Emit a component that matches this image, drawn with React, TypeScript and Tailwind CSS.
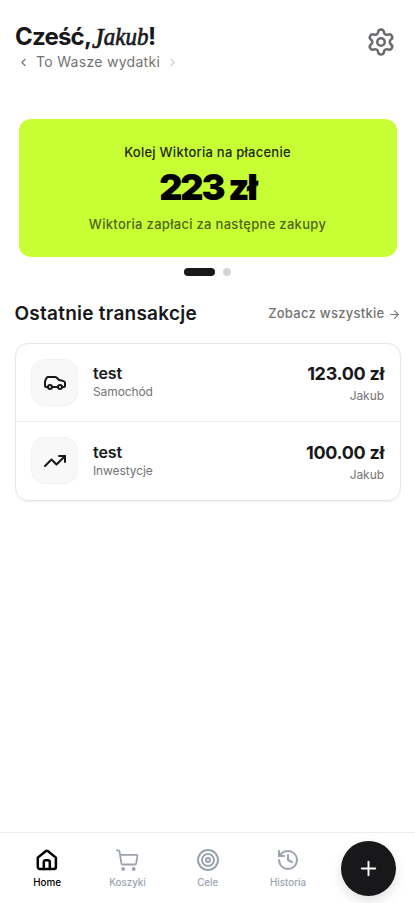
import React from "react";
import { ArrowRight, Car, ChevronLeft, ChevronRight, History, Plus, Settings, Target, TrendingUp, type LucideIcon } from "lucide-react";

type Transaction = { name: string; category: string; amount: string; person: string; icon: LucideIcon };

const transactions: Transaction[] = [
  { name: "test", category: "Samochód", amount: "123.00 zł", person: "Jakub", icon: Car },
  { name: "test", category: "Inwestycje", amount: "100.00 zł", person: "Jakub", icon: TrendingUp },
];

function HomeIcon() {
  return (
    <svg width="24" height="24" viewBox="0 0 24 24" fill="none" stroke="currentColor" strokeWidth="2.5" strokeLinejoin="round" strokeLinecap="round">
      <path d="M2.8 9.6 10.6 3.2a2 2 0 0 1 2.5 0l7.8 6.4V19a2 2 0 0 1-2 2H4.8a2 2 0 0 1-2-2Z" />
      <path d="M8.8 21v-6.8a2 2 0 0 1 2-2h2a2 2 0 0 1 2 2V21" />
    </svg>
  );
}

function CartIcon() {
  return (
    <svg width="24" height="24" viewBox="0 0 24 24" fill="none" stroke="currentColor" strokeWidth="1.8" strokeLinejoin="round" strokeLinecap="round">
      <path d="M1.9 2.4h1.3c.7 0 1.2.4 1.3 1l1.9 11.9c.1.8.7 1.2 1.4 1.2h12c.7 0 1.3-.4 1.4-1.1l1.2-7.2c.1-.8-.4-1.4-1.2-1.4H5.1" />
      <circle cx="8.2" cy="21" r="1.9" fill="currentColor" stroke="none" />
      <circle cx="18.7" cy="21" r="1.9" fill="currentColor" stroke="none" />
    </svg>
  );
}

const tabs = [
  { label: "Home", icon: <HomeIcon />, active: true },
  { label: "Koszyki", icon: <CartIcon />, active: false },
  { label: "Cele", icon: <Target size={24} />, active: false },
  { label: "Historia", icon: <History size={24} />, active: false },
];

function Header() {
  return (
    <header className="flex h-[118.5px] shrink-0 items-start justify-between pl-[15px] pr-[19px] pt-[22px]">
      <div>
        <h1 className="flex h-[29px] items-center whitespace-nowrap text-[24px] font-bold leading-[29px] tracking-[-0.8px]">
          <span className="w-[77px]">Cześć,</span>
          <span className="w-[56px] origin-left scale-x-[0.88] font-['Liberation_Serif',serif] text-[26px] font-normal italic tracking-[0.1px] [-webkit-text-stroke:0.7px_#18181b]">
            <span className="inline-block translate-y-[3px] text-[30px] leading-[26px]">J</span>akub
          </span>
          <span>!</span>
        </h1>
        <div className="flex h-[22px] items-center text-[14px] leading-5 tracking-[0.3px] text-[#737373]">
          <ChevronLeft size={13} className="ml-[2px] mr-[6px]" strokeWidth={2} />
          <span>To Wasze wydatki</span>
          <ChevronRight size={13} className="ml-[6px] text-[#d0d0d0]" strokeWidth={2} />
        </div>
      </div>
      <button className="mt-[5px]" aria-label="Ustawienia">
        <Settings size={30} strokeWidth={2} className="text-[#6b6b6f]" />
      </button>
    </header>
  );
}

function BalanceCard() {
  return (
    <section>
      <div className="mx-[18.5px] flex h-[138.5px] flex-col items-center rounded-[12px] bg-[#c8ff34] pt-[23px]">
        <p className="text-[13px] font-medium leading-5 tracking-[0.25px] text-[#1e2908]">Kolej Wiktoria na płacenie</p>
        <p className="mt-[5px] text-[36px] font-black leading-10 tracking-[-2.2px] text-black">223 zł</p>
        <p className="mt-[7px] text-[13px] font-medium leading-5 tracking-[0.3px] text-[#50661a]">Wiktoria zapłaci za następne zakupy</p>
      </div>
      <div className="mt-[11px] flex h-2 items-center justify-center gap-2">
        <span className="h-2 w-[31px] rounded-full bg-[#18181b]" />
        <span className="size-2 rounded-full bg-[#d4d4d4]" />
      </div>
    </section>
  );
}

function TransactionRow({ item }: { item: Transaction }) {
  const Icon = item.icon;
  return (
    <li className="flex h-[78px] items-center px-[15.5px]">
      <div className="flex size-[47px] items-center justify-center rounded-[14px] border border-[#f1f1f1] bg-[#f8f8f8]">
        <Icon size={24} strokeWidth={2} />
      </div>
      <div className="ml-[15px] flex-1">
        <p className="text-[16px] font-semibold leading-5 tracking-[-0.1px]">{item.name}</p>
        <p className="text-[12px] leading-[18px] tracking-[-0.1px] text-[#737373]">{item.category}</p>
      </div>
      <div className="pt-[4px] text-right">
        <p className="text-[18px] font-bold leading-6 tracking-[-0.3px]">{item.amount}</p>
        <p className="text-[12px] leading-5 tracking-[-0.05px] text-[#737373]">{item.person}</p>
      </div>
    </li>
  );
}

function BottomNav() {
  return (
    <nav className="flex h-[71px] shrink-0 items-start border-t border-[#ececee] pl-[7px]">
      {tabs.map(({ label, icon, active }) => (
        <div key={label} className={active ? "flex w-[80.3px] flex-col items-center pt-[14.5px] text-black" : "flex w-[80.3px] flex-col items-center pt-[14.5px] text-[#9ca3af]"}>
          {icon}
          <span className="mt-[3.5px] text-[9.8px] font-medium leading-4">{label}</span>
        </div>
      ))}
      <button aria-label="Dodaj" className="ml-[13px] mt-[8px] flex size-[55px] shrink-0 items-center justify-center rounded-full bg-[#18181b] text-white shadow-[0_5px_12px_rgba(0,0,0,0.12)]">
        <Plus size={23} strokeWidth={2} />
      </button>
    </nav>
  );
}

export default function App() {
  return (
    <div className="flex h-screen flex-col overflow-hidden bg-white font-['Inter',sans-serif] text-[#18181b]">
      <Header />
      <BalanceCard />
      <main className="flex-1 px-[14.5px] pt-[26px]">
        <div className="flex h-[24px] items-center justify-between">
          <h2 className="text-[19px] font-semibold tracking-[0.25px]">Ostatnie transakcje</h2>
          <a className="flex items-center gap-[3px] text-[13px] font-medium tracking-[0.28px] text-[#737373]">
            Zobacz wszystkie
            <ArrowRight size={13} strokeWidth={2} />
          </a>
        </div>
        <ul className="mt-[16.5px] divide-y divide-[#f1f1f1] rounded-[13px] border border-[#e5e5e5] shadow-[0_1px_2px_rgba(0,0,0,0.05)]">
          {transactions.map((item) => <TransactionRow key={item.category} item={item} />)}
        </ul>
      </main>
      <BottomNav />
    </div>
  );
}
